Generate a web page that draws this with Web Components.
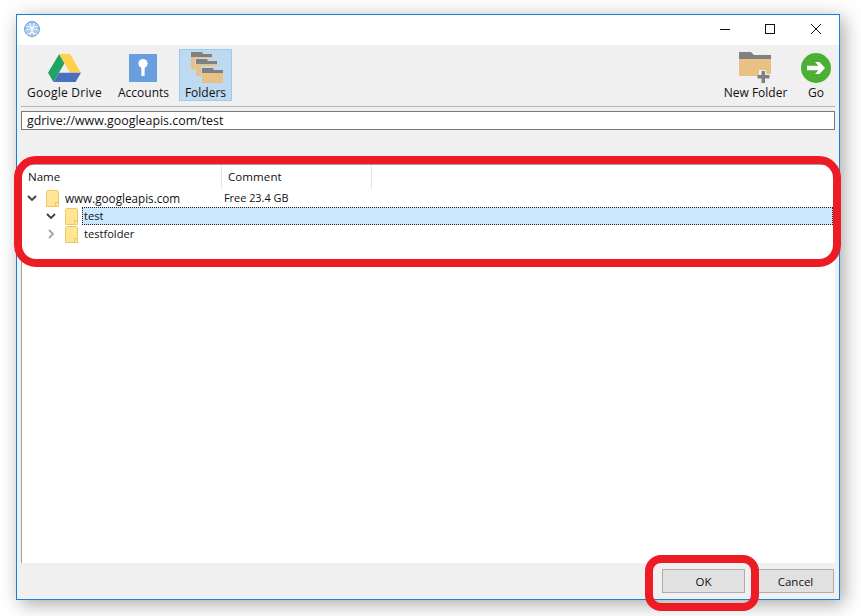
<!DOCTYPE html>
<html>
<head>
<meta charset="utf-8">
<title>Select folder</title>
<style>
  html, body {
    margin: 0;
    background: #fff;
    font-family: "Open Sans", "Noto Sans", sans-serif;
    font-size: 11.5px;
    color: #111;
  }
  body { height: 616px; overflow: hidden; }
</style>
</head>
<body>

<app-window>
  <title-bar></title-bar>
  <tool-bar>
    <tool-button label="Google Drive" width="87" spacing="0.25">
      <svg width="33" height="32" viewBox="0 0 33 32">
        <path fill="#1fa463" d="M11.2 2 L0 20.8 L5.4 30 L16.5 11.2 Z"/>
        <path fill="#ffd04b" d="M11.2 2 H22 L33 20.8 H22 Z"/>
        <path fill="#4b70c0" d="M5.4 30 H27.6 L33 20.8 H10.9 Z"/>
      </svg>
    </tool-button>
    <tool-button label="Accounts" width="63">
      <svg width="28" height="32" viewBox="0 0 28 32" style="margin-left:-1px">
        <rect x="0" y="2" width="28" height="28" fill="#6a9fdf"/>
        <circle cx="14" cy="11.5" r="4.6" fill="#fff"/>
        <path fill="#fff" d="M12.2 13 H15.8 L15.6 24 H12.4 Z"/>
      </svg>
    </tool-button>
    <tool-button label="Folders" width="53" active>
      <svg width="36" height="33" viewBox="0 0 36 33">
        <g id="f">
          <path fill="#808080" d="M3 0 H14 L15 2 H24 V5 H3 Z"/>
          <rect x="3" y="5" width="21" height="12" fill="#e9c184"/>
          <rect x="7" y="6" width="22" height="8" fill="#bedaf0"/>
          <path fill="#808080" d="M8 7 H19 L20 9 H29 V12 H8 Z"/>
          <rect x="8" y="12" width="21" height="12" fill="#e9c184"/>
          <rect x="13" y="14" width="22" height="19" fill="#bedaf0"/>
          <path fill="#808080" d="M14 16 H25 L26 18 H35 V21 H14 Z"/>
          <rect x="14" y="21" width="21" height="10" fill="#e9c184"/>
        </g>
      </svg>
    </tool-button>
    <span class="spacer" style="flex:1"></span>
    <tool-button label="New Folder" width="75">
      <svg width="36" height="32" viewBox="0 0 36 32" style="margin-left:-1px">
        <path fill="#808080" d="M2 1 Q2 0 3 0 H14 L17 3 H34 V7 H2 Z"/>
        <path fill="#e9c184" d="M2 7 H34 V22 H29 V18 H22 V24 H2 Z"/>
        <path fill="#808080" d="M24.500 19 H28 V23 H32.500 V26.500 H28 V31 H24.500 V26.500 H20.500 V23 H24.500 Z"/>
      </svg>
    </tool-button>
    <tool-button label="Go" width="38">
      <svg width="30" height="32" viewBox="0 0 30 32">
        <circle cx="15" cy="16" r="15" fill="#4cb034"/>
        <path fill="#fff" d="M6 13.800 H17.500 L14 10 H18.500 L24 16 L18.500 22 H14 L17.500 18.200 H6 Z"/>
      </svg>
    </tool-button>
  </tool-bar>
  <address-bar value="gdrive://www.googleapis.com/test"></address-bar>
  <folder-tree>
    <tree-row depth="0" open name="www.googleapis.com" comment="Free 23.4 GB"></tree-row>
    <tree-row depth="1" open selected name="test"></tree-row>
    <tree-row depth="1" name="testfolder"></tree-row>
  </folder-tree>
  <dialog-footer>
    <push-button width="83">OK</push-button>
    <push-button width="77">Cancel</push-button>
  </dialog-footer>
</app-window>

<red-mark left="14" top="156" width="827" height="111"></red-mark>
<red-mark left="645" top="555" width="114" height="56" radius="16"></red-mark>

<script>
  function make(name, html) {
    customElements.define(name, class extends HTMLElement {
      constructor() {
        super();
        this.root = this.attachShadow({ mode: 'open' });
      }
      connectedCallback() {
        this.root.innerHTML = html(this);
      }
    });
  }

  make('app-window', () => `
    <style>
      :host {
        display: flex;
        flex-direction: column;
        box-sizing: border-box;
        width: 824px;
        height: 586px;
        margin: 14px 0 0 16px;
        border: 1px solid #1a7fd6;
        background: #f0f0f0;
        box-shadow: 4px 4px 18px rgba(0,0,0,0.35);
      }
    </style>
    <slot></slot>
  `);

  make('title-bar', () => `
    <style>
      :host {
        display: flex;
        align-items: center;
        box-sizing: border-box;
        height: 30px;
        padding: 0 14px 2px 7px;
        background: #fff;
      }
      .app { width: 16px; height: 16px; margin-right: auto; }
      .ctl { display: block; width: 10px; height: 10px; margin-left: 35px; }
      .ctl:first-of-type { margin-left: 0; }
    </style>
    <svg class="app" viewBox="0 0 16 16">
      <circle cx="8" cy="8" r="7.400" fill="#a9c8ee" stroke="#5d9be0"/>
      <path fill="none" stroke="#fff" stroke-width="0.900" d="M2 5 Q8 8 14 5 M1.500 9.500 Q8 6 14.500 9.500 M3 13 Q8 10 13 13 M5.500 2 Q9 8 6 14.500 M10.500 2 Q7 8 10 14.500"/>
    </svg>
    <svg class="ctl" viewBox="0 0 10 10"><path d="M0 5.500 H10" stroke="#111" fill="none"/></svg>
    <svg class="ctl" viewBox="0 0 10 10"><rect x="0.500" y="0.500" width="9" height="9" stroke="#111" fill="none"/></svg>
    <svg class="ctl" style="margin-right:4px;margin-left:36px" viewBox="0 0 10 10"><path d="M0 0 L10 10 M10 0 L0 10" stroke="#111" fill="none"/></svg>
  `);

  make('tool-bar', () => `
    <style>
      :host {
        display: flex;
        gap: 4px;
        margin: 0 4px;
        padding: 4px 0 5px;
        border-bottom: 1px solid #b4b4b4;
      }
    </style>
    <slot></slot>
  `);

  make('tool-button', (el) => `
    <style>
      :host {
        display: flex;
        flex-direction: column;
        align-items: center;
        box-sizing: border-box;
        width: ${el.getAttribute('width')}px;
        height: 52px;
        padding-top: 2px;
        border: 1px solid ${el.hasAttribute('active') ? '#99ccf2' : 'transparent'};
        background: ${el.hasAttribute('active') ? '#bedaf0' : 'transparent'};
      }
      .icon { display: flex; justify-content: center; height: 32px; }
      .label {
        padding-top: 1px;
        font-size: 12px;
        line-height: 16px;
        letter-spacing: ${el.getAttribute('spacing') || 0}px;
        white-space: nowrap;
      }
    </style>
    <div class="icon"><slot></slot></div>
    <div class="label">${el.getAttribute('label')}</div>
  `);

  make('address-bar', (el) => `
    <style>
      :host {
        display: block;
        box-sizing: border-box;
        height: 19px;
        margin: 4px 4px 0;
        padding-left: 5px;
        border: 1px solid #7a7a7a;
        background: #fff;
        font-size: 12.4px;
        line-height: 17px;
      }
    </style>
    ${el.getAttribute('value')}
  `);

  make('folder-tree', () => `
    <style>
      :host {
        display: block;
        flex: 1;
        margin: 34px 4px 0;
        border-top: 1px solid #a0a0a0;
        border-left: 1px solid #a0a0a0;
        background: #fff;
      }
      .head { display: flex; height: 24px; line-height: 24px; }
      .col { box-sizing: border-box; border-right: 1px solid #e5e5e5; }
      .name { width: 200px; padding-left: 6px; }
      .comment { width: 150px; padding-left: 6px; letter-spacing: 0.1px; }
    </style>
    <div class="head">
      <div class="col name">Name</div>
      <div class="col comment">Comment</div>
    </div>
    <slot></slot>
  `);

  make('tree-row', (el) => {
    const depth = Number(el.getAttribute('depth'));
    const open = el.hasAttribute('open');
    const selected = el.hasAttribute('selected');
    const comment = el.getAttribute('comment');
    const chevron = open
      ? '<path d="M1 3 L5 7 L9 3" stroke="#404040" stroke-width="1.800" fill="none"/>'
      : '<path d="M3 1 L7 5 L3 9" stroke="#a6a6a6" stroke-width="1.800" fill="none"/>';
    return `
      <style>
        :host {
          display: flex;
          align-items: center;
          height: 18px;
          padding-left: ${5 + depth * 19}px;
        }
        .chev { width: 10px; height: 10px; margin-right: 9px; flex: none; }
        .folder { width: 13px; height: 17px; margin-right: 4px; flex: none; }
        .label {
          display: flex;
          flex: 1;
          box-sizing: border-box;
          height: 18px;
          margin-right: 2px;
          padding-left: 1px;
          line-height: 16px;
          border: 1px dotted ${selected ? '#222' : 'transparent'};
          background: ${selected ? '#cce8ff' : 'transparent'};
        }
        .text { width: ${159 - depth * 19}px; font-size: ${depth ? 11.1 : 11.7}px; white-space: nowrap; }
        .note { font-size: 10.9px; }
      </style>
      <svg class="chev" viewBox="0 0 10 10">${chevron}</svg>
      <svg class="folder" viewBox="0 0 13 17">
        <path d="M1.500 0.500 H11.500 L12.500 1.500 V16.500 H0.500 V1.500 Z" fill="#ffe595" stroke="#ecca62"/>
        <path d="M9.500 16.500 V12.500 H12.500" fill="none" stroke="#ecca62"/>
      </svg>
      <div class="label"><span class="text">${el.getAttribute('name')}</span>${comment ? `<span class="note">${comment}</span>` : ''}</div>
    `;
  });

  make('dialog-footer', () => `
    <style>
      :host {
        display: flex;
        justify-content: flex-end;
        align-items: center;
        gap: 12px;
        height: 36px;
        padding-right: 5px;
        background: #f0f0f0;
      }
    </style>
    <slot></slot>
  `);

  make('push-button', (el) => `
    <style>
      :host {
        display: flex;
        align-items: center;
        justify-content: center;
        box-sizing: border-box;
        width: ${el.getAttribute('width')}px;
        height: 24px;
        border: 1px solid #adadad;
        background: #e1e1e1;
      }
    </style>
    <slot></slot>
  `);

  make('red-mark', (el) => `
    <style>
      :host {
        position: absolute;
        left: ${el.getAttribute('left')}px;
        top: ${el.getAttribute('top')}px;
        box-sizing: border-box;
        width: ${el.getAttribute('width')}px;
        height: ${el.getAttribute('height')}px;
        border: 8px solid #ed1c24;
        border-radius: ${el.getAttribute('radius') || 22}px;
      }
    </style>
  `);
</script>
</body>
</html>
